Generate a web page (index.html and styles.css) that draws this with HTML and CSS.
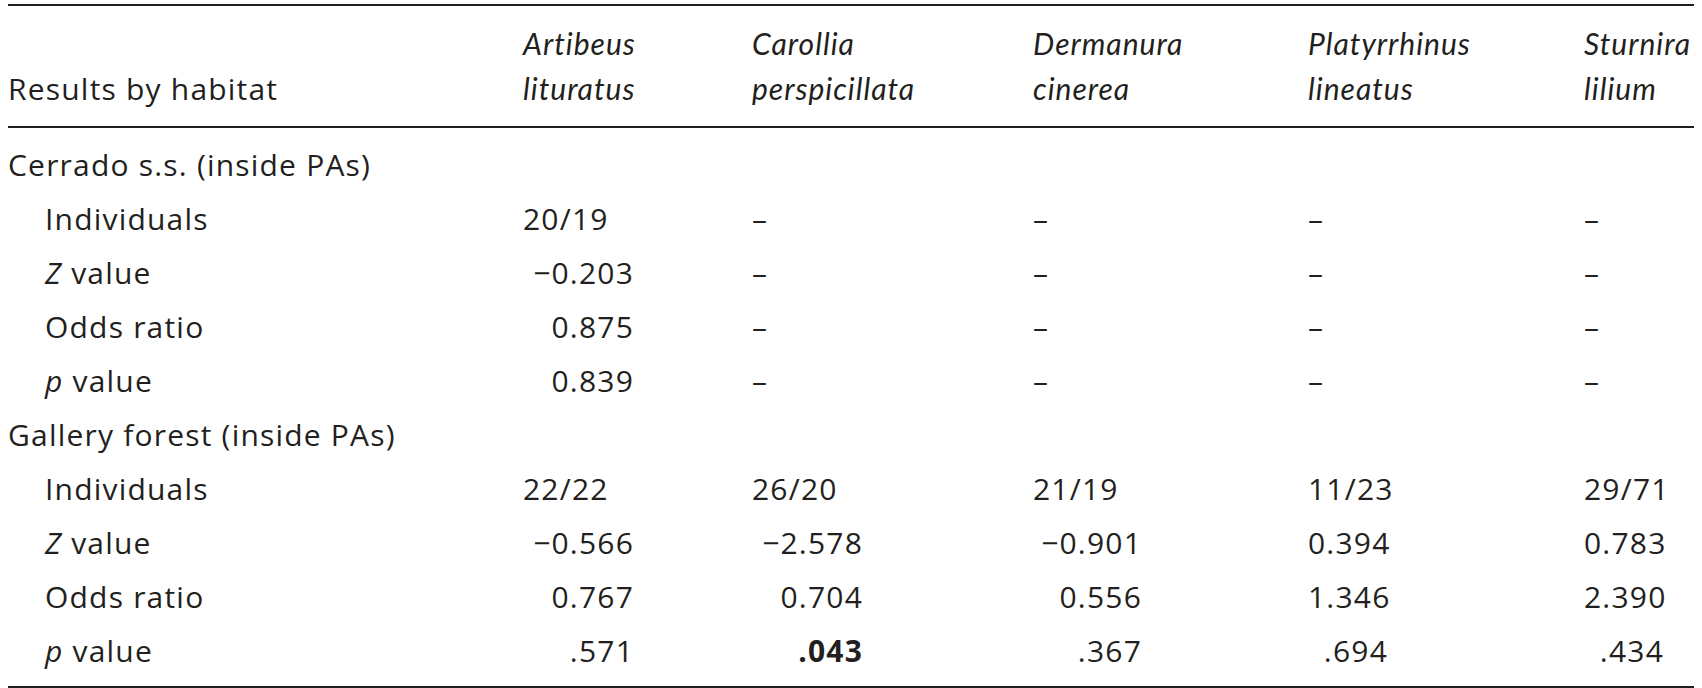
FILE: index.html
```html
<!DOCTYPE html>
<html lang="en">
<head>
<meta charset="utf-8">
<title>Results by habitat</title>
<link rel="stylesheet" href="styles.css">
</head>
<body>
<table class="results">
  <colgroup>
    <col class="c-label">
    <col class="c-a">
    <col class="c-b">
    <col class="c-c">
    <col class="c-d">
    <col class="c-e">
  </colgroup>
  <thead>
    <tr>
      <th class="label">Results by habitat</th>
      <th><em class="sp">Artibeus</em><br><em class="sp">lituratus</em></th>
      <th><em class="sp">Carollia</em><br><em class="sp">perspicillata</em></th>
      <th><em class="sp">Dermanura</em><br><em class="sp">cinerea</em></th>
      <th><em class="sp">Platyrrhinus</em><br><em class="sp">lineatus</em></th>
      <th><em class="sp">Sturnira</em><br><em class="sp">lilium</em></th>
    </tr>
  </thead>
  <tbody>
    <tr class="first">
      <td class="group">Cerrado s.s. (inside PAs)</td>
      <td></td><td></td><td></td><td></td><td></td>
    </tr>
    <tr>
      <td class="sub">Individuals</td>
      <td>20/19</td><td>–</td><td>–</td><td>–</td><td>–</td>
    </tr>
    <tr>
      <td class="sub"><em>Z</em> value</td>
      <td><span class="num w111">−0.203</span></td><td>–</td><td>–</td><td>–</td><td>–</td>
    </tr>
    <tr>
      <td class="sub">Odds ratio</td>
      <td><span class="num w111">0.875</span></td><td>–</td><td>–</td><td>–</td><td>–</td>
    </tr>
    <tr>
      <td class="sub"><em>p</em> value</td>
      <td><span class="num w111">0.839</span></td><td>–</td><td>–</td><td>–</td><td>–</td>
    </tr>
    <tr>
      <td class="group">Gallery forest (inside PAs)</td>
      <td></td><td></td><td></td><td></td><td></td>
    </tr>
    <tr>
      <td class="sub">Individuals</td>
      <td>22/22</td><td>26/20</td><td>21/19</td><td>11/23</td><td>29/71</td>
    </tr>
    <tr>
      <td class="sub"><em>Z</em> value</td>
      <td><span class="num w111">−0.566</span></td>
      <td><span class="num w111">−2.578</span></td>
      <td><span class="num w109">−0.901</span></td>
      <td><span class="num w80">0.394</span></td>
      <td><span class="num w80">0.783</span></td>
    </tr>
    <tr>
      <td class="sub">Odds ratio</td>
      <td><span class="num w111">0.767</span></td>
      <td><span class="num w111">0.704</span></td>
      <td><span class="num w109">0.556</span></td>
      <td><span class="num w80">1.346</span></td>
      <td><span class="num w80">2.390</span></td>
    </tr>
    <tr class="last">
      <td class="sub"><em>p</em> value</td>
      <td><span class="num w111">.571</span></td>
      <td><span class="num w111"><strong>.043</strong></span></td>
      <td><span class="num w109">.367</span></td>
      <td><span class="num w80">.694</span></td>
      <td><span class="num w80">.434</span></td>
    </tr>
  </tbody>
</table>
</body>
</html>
```

FILE: styles.css
```css
html, body {
  background: #ffffff;
}

body {
  margin: 4px 8px 0;
  font-family: "Open Sans", Lato, "Liberation Sans", sans-serif;
  font-size: 30px;
  letter-spacing: 1.2px;
  color: #231f20;
}

.results {
  width: 1686px;
  border-collapse: collapse;
  table-layout: fixed;
  border-top: 2px solid #231f20;
  border-bottom: 2px solid #231f20;
}

.c-label { width: 515px; }
.c-a { width: 229px; }
.c-b { width: 281px; }
.c-c { width: 275px; }
.c-d { width: 276px; }
.c-e { width: 110px; }

.results th {
  font-weight: 400;
  text-align: left;
  vertical-align: bottom;
  line-height: 45px;
  padding: 15px 0 15px;
  border-bottom: 2px solid #231f20;
  white-space: nowrap;
}

.results th.label {
  padding-left: 0;
}

.results em {
  font-style: italic;
}

.results em.sp {
  font-family: Lato, "Open Sans", sans-serif;
  letter-spacing: 1px;
  font-variant-ligatures: none;
}

.results td {
  line-height: 54px;
  padding: 0;
  text-align: left;
  white-space: nowrap;
  vertical-align: baseline;
}

.results tr.first td {
  padding-top: 10px;
}

.results tr.last td {
  padding-bottom: 8px;
}

.results td.group {
  padding-left: 0;
}

.results td.sub {
  padding-left: 37px;
}

.num {
  display: inline-block;
  text-align: right;
  margin-right: -1px;
}

.w111 { width: 111px; }
.w109 { width: 109px; }
.w80 { width: 80px; }

.num strong {
  font-weight: 700;
}
```
